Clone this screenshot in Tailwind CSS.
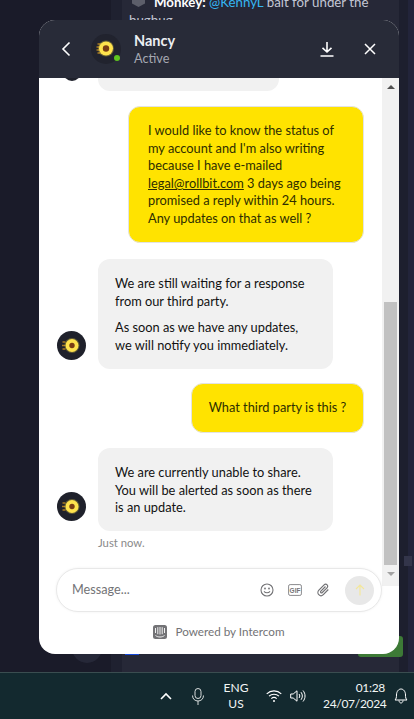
<!DOCTYPE html>
<html lang="en">
<head>
    <meta charset="UTF-8">
    <meta name="viewport" content="width=device-width, initial-scale=1.0">
    <title>Nancy - Chat</title>
    <script src="https://cdn.jsdelivr.net/npm/@tailwindcss/browser@4"></script>
</head>
<body class="bg-[#1a1b29] overflow-hidden font-['Lato','Open_Sans',sans-serif]">
<div class="relative w-[414px] h-[719px] flex flex-col overflow-hidden">

    <!-- Page behind the widget -->
    <div class="flex flex-1 min-h-0">
        <div class="w-[111px] shrink-0 bg-[#1a1b29] flex flex-col justify-end items-end pr-[9px] pb-[9px]">
            <div class="w-[30px] h-[30px] rounded-full bg-[#262838]"></div>
        </div>
        <div class="flex-1 min-w-0 flex bg-[#1f2130] pl-[11px]">
            <div class="flex-1 min-w-0 bg-[#262837] px-[7px] relative">
                <div class="flex items-start h-[9px] pl-[3px] text-[13.300px] leading-[8px] text-[#c3c6d4] whitespace-nowrap overflow-hidden">
                    <svg class="w-[13px] h-[14px] shrink-0 -mt-[7px] mr-[9px]" viewBox="0 0 13 14" fill="#5c5e6a"><path d="M6.500 0l6.500 3.500v7L6.500 14 0 10.500v-7z"/></svg>
                    <span class="-mt-[2px]"><b class="text-white">Monkey:</b> <span class="text-[#35b6f2]">@KennyL</span> bait for under the</span>
                </div>
                <p class="text-[13.300px] leading-[16px] text-[#c3c6d4] mt-[3px]">bugbug</p>
                <div class="absolute left-[3px] bottom-[17px] w-[14px] h-[2px] bg-[#1448d8]"></div>
                <div class="absolute right-0 bottom-[50px] w-[4px] h-[32px] bg-[#1c1e2b]"></div>
            </div>
            <div class="w-[9px] bg-[#1d1f2e] shrink-0"></div>
            <div class="w-[6px] bg-[#22243a] shrink-0"></div>
        </div>
    </div>

    <!-- bits of the page that lie under the widget's right edge -->
    <div class="absolute left-[358px] top-[636px] w-[45px] h-[21px] rounded-[3px] bg-[#3d7a36]"></div>
    <div class="absolute left-[404px] top-[556px] w-[8px] h-[10px] bg-[#33354a]"></div>

    <!-- Taskbar -->
    <div class="h-[47px] bg-[#13292f] border-t border-[#3a4d50] flex items-center justify-end text-[#f2f5f5] text-[12px] leading-[16px] pr-[6px] shrink-0">
        <svg class="w-[12px] h-[12px] mr-[20px]" viewBox="0 0 12 12" fill="none" stroke="#fff" stroke-width="1.600"><path d="M1 9l5-5 5 5"/></svg>
        <svg class="w-[12px] h-[17px] mr-[20px]" viewBox="0 0 12 17" fill="none" stroke="#d8dddd" stroke-width="1"><rect x="3" y=".5" width="6" height="10" rx="3"/><path d="M.5 7.500c0 3.500 2.500 5.500 5.500 5.500s5.500-2 5.500-5.500M6 13v4"/></svg>
        <div class="w-[24px] text-center mr-[18px] whitespace-nowrap flex flex-col items-center"><span>ENG</span><span>US</span></div>
        <svg class="w-[16px] h-[14px] mr-[8px]" viewBox="0 0 16 14" fill="none" stroke="#fff" stroke-width="1.100"><path d="M.7 4.800C4.800.9 11.200.9 15.300 4.800M3 7.200c2.800-2.600 7.200-2.600 10 0M5.300 9.600c1.500-1.300 3.900-1.300 5.400 0"/><circle cx="8" cy="12" r="1" fill="#fff" stroke="none"/></svg>
        <svg class="w-[16px] h-[14px] mr-[17px]" viewBox="0 0 16 14" fill="none" stroke="#fff" stroke-width="1"><path d="M.7 5h2.500L7 1.800v10.400L3.200 9H.7zM9 5c1 1.200 1 2.800 0 4M11 3.200c1.800 2.200 1.800 5.400 0 7.600M13 1.500c2.700 3.300 2.700 7.700 0 11"/></svg>
        <div class="w-[62px] text-right mr-[9px] whitespace-nowrap tracking-[-0.3px]">01:28<br>24/07/2024</div>
        <svg class="w-[14px] h-[16px]" viewBox="0 0 14 16" fill="none" stroke="#fff" stroke-width="1"><path d="M1 12c1.200-1.200 1.500-2.500 1.500-5C2.500 3.500 4.500 1 7 1s4.500 2.500 4.500 6c0 2.500.3 3.800 1.500 5zM5 12.500c0 1.500 1 2.500 2 2.500s2-1 2-2.500"/></svg>
    </div>

    <!-- Messenger widget -->
    <div class="absolute left-[39px] top-[20px] w-[360px] h-[634px] rounded-[16px] bg-white overflow-hidden flex flex-col">

        <!-- Header -->
        <div class="h-[58px] bg-[#282b38] flex items-center shrink-0 text-white">
            <svg class="w-[12px] h-[16px] ml-[21px] mr-[19px]" viewBox="0 0 12 16" fill="none" stroke="#fff" stroke-width="1.600"><path d="M9.500 1.500L3 8l6.500 6.500"/></svg>
            <div class="relative w-[30px] h-[30px] rounded-full bg-[#21232e] mr-[13px] shrink-0">
                <svg class="w-[30px] h-[30px]" viewBox="0 0 30 30"><path d="M6.500 10h3M5.500 13h3M5.500 16h3M6.500 19h3" stroke="#d89a20" stroke-width="1.500" opacity=".75"/><circle cx="15" cy="14.500" r="8" fill="#ffe34d" opacity=".3"/><circle cx="15" cy="14.500" r="7" fill="#ffe34d"/><circle cx="15" cy="14.500" r="3.200" fill="#7a3d14"/></svg>
                <span class="absolute right-[1px] bottom-[3px] w-[6px] h-[6px] rounded-full bg-[#5fc51f]"></span>
            </div>
            <div class="flex-1">
                <div class="text-[14.500px] leading-[18px] font-bold text-[#eceef2]">Nancy</div>
                <div class="text-[12.700px] leading-[16px] text-[#a5a8b2]">Active</div>
            </div>
            <svg class="w-[14px] h-[15px] mr-[30px]" viewBox="0 0 14 15" fill="none" stroke="#fff" stroke-width="1.600"><path d="M7 0v10M2.500 5.800L7 10l4.500-4.200M.5 14h13"/></svg>
            <svg class="w-[12px] h-[12px] mr-[23px]" viewBox="0 0 12 12" fill="none" stroke="#fff" stroke-width="1.500"><path d="M1 1l10 10M11 1L1 11"/></svg>
        </div>

        <!-- Conversation + scrollbar -->
        <div class="flex h-[508px] shrink-0 overflow-hidden">
            <div class="flex-1 flex flex-col text-[12.800px] leading-[17.600px] text-[#111111]">

                <div class="flex items-start h-[13px]">
                    <div class="w-[29px] h-[3px] ml-[18px] overflow-hidden flex justify-center"><div class="w-[18px] h-[18px] shrink-0 rounded-full bg-[#1f212b] -mt-[15px]"></div></div>
                    <div class="w-[181px] h-[13px] ml-[12px] bg-[#f1f1f1] rounded-b-[12px]"></div>
                </div>

                <div class="self-end mr-[18px] mt-[15px] w-[236px] h-[137px] rounded-[12px] bg-[#ffe300] border border-[#e3e3e3] pl-[19px] pt-[15px] whitespace-nowrap text-[#2e2e00]">
                    I would like to know the status of<br>my account and I'm also writing<br>because I have e-mailed<br><a href="#" class="underline">legal@rollbit.com</a> 3 days ago being<br>promised a reply within 24 hours.<br>Any updates on that as well ?
                </div>

                <div class="flex items-end mt-[16px]">
                    <div class="w-[29px] h-[29px] rounded-full bg-[#1f212b] ml-[18px] mb-[9px] shrink-0">
                        <svg class="w-[29px] h-[29px]" viewBox="0 0 29 29"><path d="M5.500 11h3M5 14.500h3M5.500 18h3" stroke="#d89a20" stroke-width="1.500" opacity=".75"/><circle cx="15" cy="14.500" r="7.500" fill="#ffe34d" opacity=".3"/><circle cx="15" cy="14.500" r="6.500" fill="#ffe34d"/><circle cx="15" cy="14.500" r="2.700" fill="#7a3d14"/></svg>
                    </div>
                    <div class="w-[235px] h-[110px] ml-[12px] rounded-[12px] bg-[#f1f1f1] pl-[17px] pt-[16px] whitespace-nowrap">
                        <p>We are still waiting for a response<br>from our third party.</p>
                        <p class="mt-[9px]">As soon as we have any updates,<br>we will notify you immediately.</p>
                    </div>
                </div>

                <div class="self-end mr-[18px] mt-[14px] h-[50px] rounded-[12px] bg-[#ffe300] border border-[#e3e3e3] w-[173px] flex items-center justify-center text-[#2e2e00]">What third party is this ?</div>

                <div class="flex items-end mt-[15px]">
                    <div class="w-[29px] h-[29px] rounded-full bg-[#1f212b] ml-[18px] mb-[10px] shrink-0">
                        <svg class="w-[29px] h-[29px]" viewBox="0 0 29 29"><path d="M5.500 11h3M5 14.500h3M5.500 18h3" stroke="#d89a20" stroke-width="1.500" opacity=".75"/><circle cx="15" cy="14.500" r="7.500" fill="#ffe34d" opacity=".3"/><circle cx="15" cy="14.500" r="6.500" fill="#ffe34d"/><circle cx="15" cy="14.500" r="2.700" fill="#7a3d14"/></svg>
                    </div>
                    <div class="w-[235px] h-[83px] ml-[12px] rounded-[12px] bg-[#f1f1f1] pl-[17px] pt-[16px] whitespace-nowrap">
                        We are currently unable to share.<br>You will be alerted as soon as there<br>is an update.
                    </div>
                </div>

                <div class="ml-[59px] mt-[4px] text-[11.300px] leading-[16px] text-[#8a8a8a]">Just now.</div>
            </div>

            <!-- Scrollbar -->
            <div class="w-[17px] bg-[#f1f1f1] flex flex-col items-center shrink-0">
                <div class="h-[17px] flex items-center justify-center"><span class="w-0 h-0 border-x-[4px] border-x-transparent border-b-[4px] border-b-[#505050]"></span></div>
                <div class="w-[13px] h-[263px] mt-[207px] bg-[#c1c1c1]"></div>
                <div class="h-[17px] flex items-center justify-center"><span class="w-0 h-0 border-x-[4px] border-x-transparent border-t-[4px] border-t-[#a3a3a3]"></span></div>
            </div>
        </div>

        <!-- Composer, sits over the bottom of the scroll area -->
        <div class="relative -mt-[18px] ml-[17px] w-[326px] h-[44px] shrink-0 rounded-full bg-white border border-[#e8e8e8] shadow-[0_0_3px_rgba(0,0,0,0.06)] flex items-center pl-[15px] pr-[7px]">
            <span class="flex-1 text-[12.700px] text-[#737376]">Message...</span>
            <svg class="w-[14px] h-[14px] mr-[14px]" viewBox="0 0 14 14" fill="none" stroke="#737376" stroke-width="1.100"><circle cx="7" cy="7" r="6"/><circle cx="5" cy="5.500" r=".9" fill="#737376" stroke="none"/><circle cx="9" cy="5.500" r=".9" fill="#737376" stroke="none"/><path d="M4 8.300c1.500 2 4.500 2 6 0"/></svg>
            <svg class="w-[14px] h-[12px] mr-[14px]" viewBox="0 0 14 12" fill="none"><rect x=".6" y=".6" width="12.800" height="10.800" rx="1.500" stroke="#8a8a8d" stroke-width="1"/><text x="7" y="8.500" text-anchor="middle" font-size="6.500" font-weight="700" fill="#737376" font-family="Liberation Sans">GIF</text></svg>
            <svg class="w-[14px] h-[14px] mr-[15px]" viewBox="0 0 14 14" fill="none" stroke="#737376" stroke-width="1.200"><path d="M12.300 6.500l-5 5.100c-1.300 1.300-3.300 1.300-4.500.1-1.200-1.200-1.200-3.200.1-4.500l5.200-5.300c.9-.9 2.200-.9 3-.1.800.8.800 2.100-.1 3L6.300 9.500c-.5.500-1.100.5-1.500.1-.4-.4-.4-1 .1-1.500L9.500 3.500"/></svg>
            <div class="w-[29px] h-[29px] rounded-full bg-[#e8e8e8] flex items-center justify-center">
                <svg class="w-[10px] h-[12px]" viewBox="0 0 10 12" fill="none" stroke="#f3e79c" stroke-width="1.200"><path d="M5 11.500V1M1 5l4-4 4 4"/></svg>
            </div>
        </div>

        <!-- Footer -->
        <div class="flex-1 flex items-center justify-center gap-[8px] pb-[2px] text-[11.700px] text-[#737376]">
            <svg class="w-[14px] h-[14px]" viewBox="0 0 14 14"><rect width="14" height="14" rx="2.500" fill="#737376"/><path d="M2.500 3v5M4.800 2.200v7M7 2v7.500M9.200 2.200v7M11.500 3v5M2.500 10.500c2.500 2 6.500 2 9 0" stroke="#fff" stroke-width=".9" fill="none"/></svg>
            <span>Powered by Intercom</span>
        </div>
    </div>
</div>
</body>
</html>
